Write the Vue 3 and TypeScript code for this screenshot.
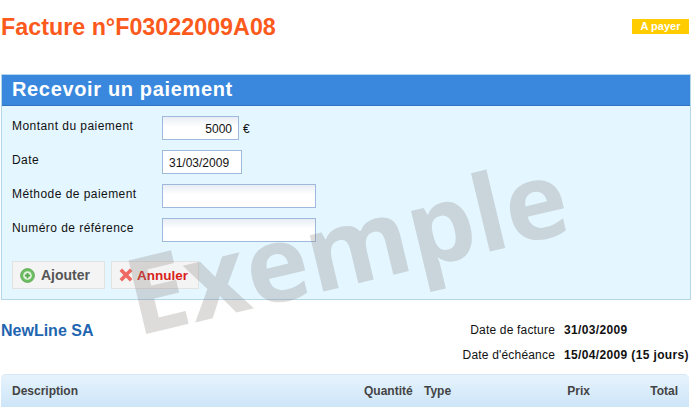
<script setup lang="ts">
const rows = [
  { label: 'Montant du paiement', value: '5000', cls: 'amount', suffix: '€' },
  { label: 'Date', value: '31/03/2009', cls: 'date', suffix: '' },
  { label: 'Méthode de paiement', value: '', cls: 'wide', suffix: '' },
  { label: 'Numéro de référence', value: '', cls: 'wide', suffix: '' },
]
</script>

<template>
  <div class="page">
    <header class="top">
      <h1>Facture n°F03022009A08</h1>
      <span class="badge">A payer</span>
    </header>

    <section class="panel">
      <h2>Recevoir un paiement</h2>
      <form class="form" @submit.prevent>
        <div v-for="row in rows" :key="row.label" class="row">
          <label>{{ row.label }}</label>
          <input :class="row.cls" :value="row.value" type="text" />
          <span v-if="row.suffix" class="suffix">{{ row.suffix }}</span>
        </div>
        <div class="actions">
          <button class="btn add" type="button">
            <svg width="15" height="15" viewBox="0 0 16 16">
              <circle cx="8" cy="8" r="7.4" fill="#6cbf60" stroke="#5a9d52" stroke-width="0.8" />
              <circle cx="8" cy="8" r="4.6" fill="#e3f2e0" />
              <path d="M8 5.2v5.6M5.2 8h5.6" stroke="#58a84e" stroke-width="2" />
            </svg>
            Ajouter
          </button>
          <button class="btn cancel" type="button">
            <svg width="14" height="14" viewBox="0 0 14 14">
              <path d="M1.8 1.8l10.4 10.4M12.2 1.8L1.8 12.2" stroke="#ee6a62" stroke-width="3.6" />
            </svg>
            Annuler
          </button>
        </div>
      </form>
    </section>

    <section class="info">
      <div class="company">NewLine SA</div>
      <dl class="dates">
        <div><dt>Date de facture</dt><dd>31/03/2009</dd></div>
        <div><dt>Date d'échéance</dt><dd>15/04/2009 (15 jours)</dd></div>
      </dl>
    </section>

    <div class="thead">
      <span class="c-desc">Description</span>
      <span class="c-qty">Quantité</span>
      <span class="c-type">Type</span>
      <span class="c-price">Prix</span>
      <span class="c-total">Total</span>
    </div>

    <div class="watermark">Exemple</div>
  </div>
</template>

<style>
html, body { margin: 0; background: #fff; overflow: hidden; }
</style>

<style scoped>
.page {
  position: relative;
  width: 696px;
  height: 411px;
  overflow: hidden;
  font-family: "Liberation Sans", Arial, sans-serif;
  font-size: 12px;
  color: #111;
  box-sizing: border-box;
  padding: 14px 5px 0 1px;
}
.top {
  display: flex;
  justify-content: space-between;
  align-items: flex-start;
  height: 60px;
}
h1 {
  margin: 0;
  font-size: 23.3px;
  line-height: 27px;
  font-weight: bold;
  color: #fb5a1c;
}
.badge {
  margin-top: 5px;
  margin-right: 2px;
  width: 57px;
  height: 15px;
  background: #ffcc00;
  color: #fff;
  font-size: 11px;
  font-weight: bold;
  line-height: 15px;
  text-align: center;
}
.panel {
  border: 1px solid #b6d6ea;
  background: #e4f6ff;
  height: 226px;
  box-sizing: border-box;
}
h2 {
  margin: 0;
  height: 31px;
  box-sizing: border-box;
  background: #3a88de;
  border-bottom: 1px solid #2f72be;
  color: #fff;
  font-size: 20px;
  line-height: 29px;
  font-weight: bold;
  letter-spacing: 0.65px;
  padding-left: 10px;
}
.form { padding: 10px 10px 0; }
.row {
  display: flex;
  align-items: flex-start;
  height: 34px;
}
.row label {
  width: 150px;
  line-height: 20px;
  letter-spacing: 0.45px;
  white-space: nowrap;
}
input {
  box-sizing: border-box;
  height: 24px;
  border: 1px solid #9fb9dd;
  background: linear-gradient(#e8edf5, #fff 45%);
  font: 12px "Liberation Sans", Arial, sans-serif;
  color: #111;
  padding: 2px 6px 0;
  margin: 0;
  outline: none;
}
input.amount { width: 77px; text-align: right; }
input.date { width: 80px; background: #fff; }
input.wide { width: 154px; }
.suffix { margin-left: 4px; line-height: 26px; }
.actions {
  display: flex;
  gap: 6px;
  margin-top: 9px;
}
.btn {
  display: flex;
  align-items: center;
  gap: 6px;
  box-sizing: border-box;
  height: 28px;
  padding: 0;
  border: 1px solid #e2e2e2;
  background: #f4f4f4;
  font: bold 13.5px "Liberation Sans", Arial, sans-serif;
}
.add { width: 93px; padding-left: 7px; color: #565656; font-size: 14px; }
.cancel { width: 88px; padding-left: 7px; color: #d8231a; gap: 4px; }
.info {
  display: flex;
  justify-content: space-between;
  height: 74px;
  padding-top: 20px;
  box-sizing: border-box;
}
.company {
  color: #1f65b0;
  font-size: 16px;
  font-weight: bold;
  line-height: 22px;
}
.dates { margin: 0; padding-top: 1px; }
.dates > div {
  display: flex;
  height: 25px;
  line-height: 18px;
  justify-content: flex-end;
}
dt { text-align: right; letter-spacing: 0.18px; }
dd {
  margin: 0 0 0 9px;
  width: 127px;
  font-weight: bold;
  white-space: nowrap;
  letter-spacing: 0.36px;
}
.thead {
  display: flex;
  height: 33px;
  line-height: 33px;
  margin-right: 2px;
  box-sizing: border-box;
  padding: 0 11px;
  border-top: 1px solid #d6e8f6;
  border-radius: 5px 5px 0 0;
  background: linear-gradient(#e6f3fd, #cde5f8);
  color: #444;
  font-weight: bold;
}
.thead span { display: block; }
.c-desc { width: 352px; }
.c-qty { width: 60px; }
.c-type { width: 101px; }
.c-price { width: 65px; text-align: right; flex: none; padding-left: 40px; box-sizing: border-box; }
.c-total { flex: 1; text-align: right; }
.watermark {
  position: absolute;
  left: 106px;
  top: 179px;
  width: 480px;
  font-family: "Open Sans", sans-serif;
  font-size: 106px;
  font-weight: 700;
  line-height: 130px;
  text-align: center;
  letter-spacing: 0;
  color: rgba(130, 125, 120, 0.27);
  transform: rotate(-13.5deg);
  pointer-events: none;
}
</style>
